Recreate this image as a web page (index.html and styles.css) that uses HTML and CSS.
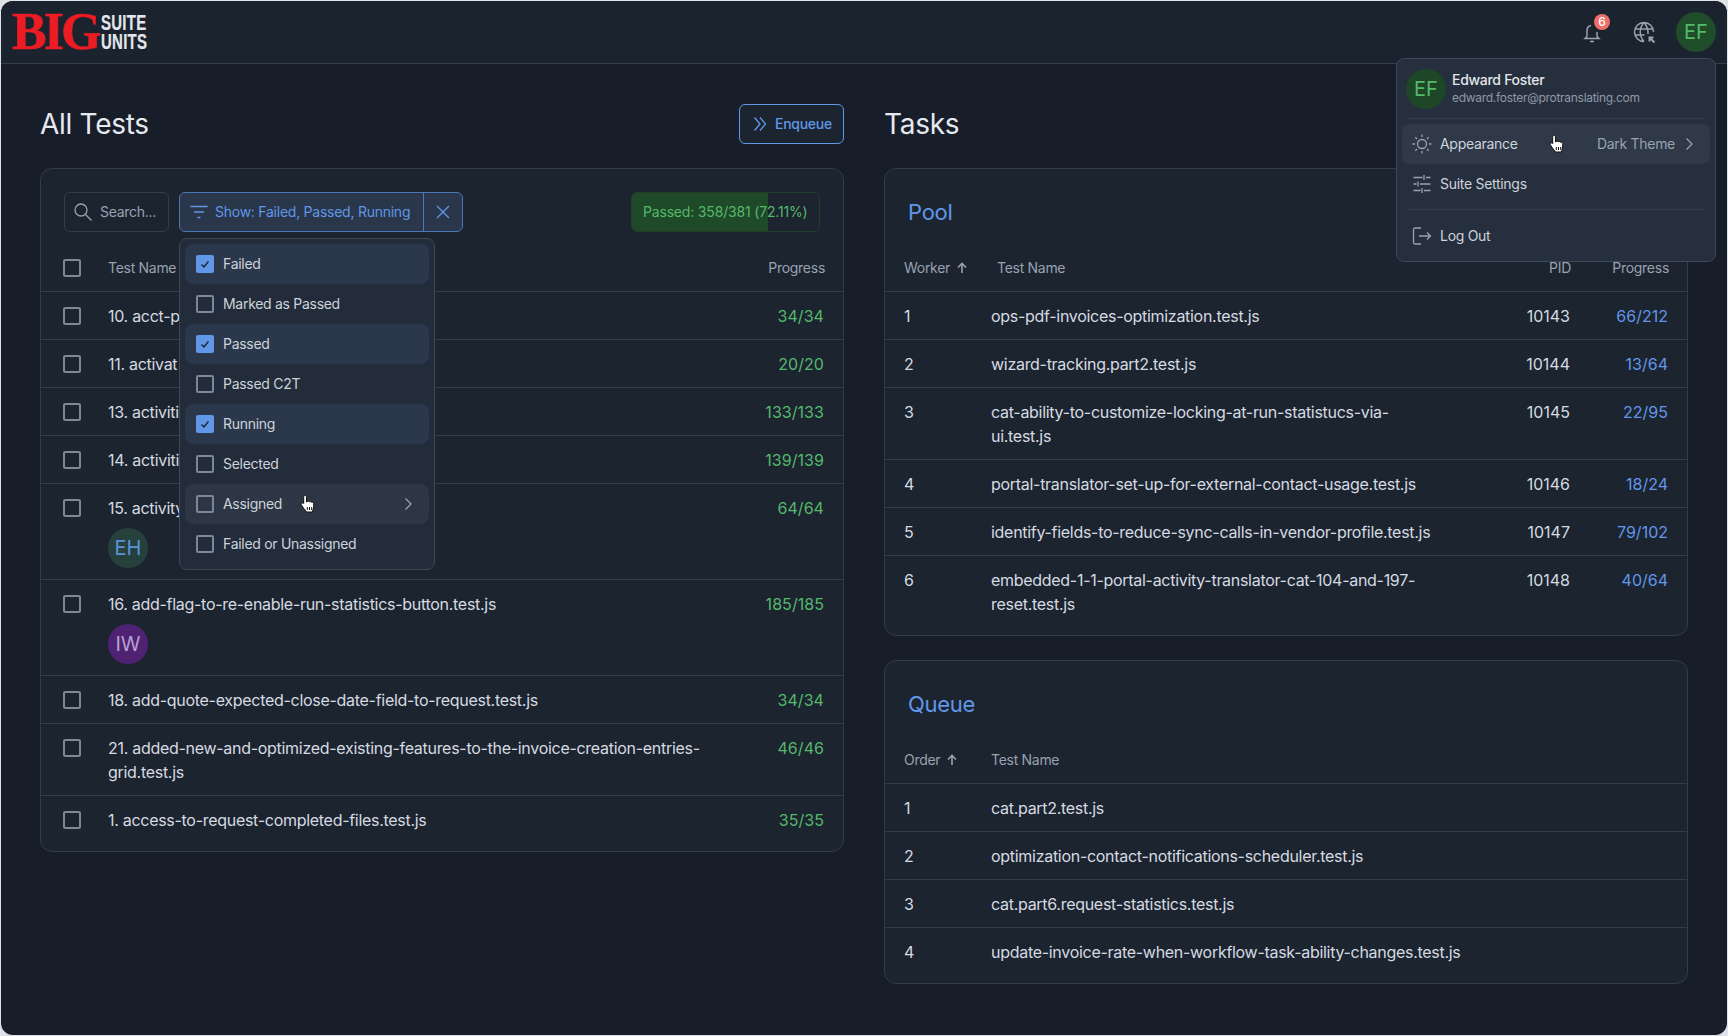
FILE: index.html
```html
<!DOCTYPE html>
<html lang="en">
<head>
<meta charset="utf-8">
<title>Big Suite Units</title>
<link rel="stylesheet" href="styles.css">
</head>
<body>
<div class="app">
  <header class="topbar">
    <div class="logo"><span class="logo-big">BIG</span><span class="logo-sub"><span>SUITE</span><span>UNITS</span></span></div>
    <div class="top-actions">
      <span class="top-icon bell">
        <svg viewBox="0 0 24 24" class="ic24"><path d="M7 16.500V10.500a5 5 0 0 1 4-4.900M17 12v4.500l2 2H5l2-2M10 21.500h4" /></svg>
        <span class="badge">6</span>
      </span>
      <span class="top-icon globe">
        <svg viewBox="0 0 24 24" class="ic24"><path d="M21.500 12a9.500 9.500 0 1 0-9.500 9.500M3 9h18M3 15h9.500M12 2.500c-5 5.500-5 13.500 0 19M12 2.500c3 3.300 4.200 7.500 4 11.500"/><path class="thick" d="M22.500 22.500l-4.500-4.500M17.500 21.500v-4h4"/></svg>
      </span>
      <span class="avatar av-green">EF</span>
    </div>
  </header>

  <main class="columns">
    <section class="col">
      <div class="col-head">
        <h1>All Tests</h1>
        <button class="enqueue"><svg viewBox="0 0 16 16" class="ic16"><path d="M2.500 1.500L8 8l-5.500 6.500M8 1.500L13.500 8 8 14.500"/></svg>Enqueue</button>
      </div>
      <div class="card">
        <div class="toolbar">
          <div class="search"><svg viewBox="0 0 20 20" class="ic20"><circle cx="8" cy="8" r="6"/><path d="M12.500 12.500L18.500 18.500"/></svg><span>Search...</span></div>
          <div class="filter">
            <div class="filter-main"><svg viewBox="0 0 20 20" class="ic20"><path d="M1.500 4.500h17M5 10h10M8.500 15.500h3"/></svg>Show: Failed, Passed, Running</div>
            <div class="filter-clear"><svg viewBox="0 0 16 16" class="ic16"><path d="M2 2l12 12M14 2L2 14"/></svg></div>
            <div class="dropdown">
              <div class="opt sel"><span class="cb on"><svg viewBox="0 0 16 16"><path d="M4 8.500l2.800 2.800L12 5"/></svg></span>Failed</div>
              <div class="opt"><span class="cb"></span>Marked as Passed</div>
              <div class="opt sel"><span class="cb on"><svg viewBox="0 0 16 16"><path d="M4 8.500l2.800 2.800L12 5"/></svg></span>Passed</div>
              <div class="opt"><span class="cb"></span>Passed C2T</div>
              <div class="opt sel"><span class="cb on"><svg viewBox="0 0 16 16"><path d="M4 8.500l2.800 2.800L12 5"/></svg></span>Running</div>
              <div class="opt"><span class="cb"></span>Selected</div>
              <div class="opt hover"><span class="cb"></span>Assigned<svg viewBox="0 0 16 16" class="ic16 opt-chev"><path d="M5.500 2.500L11 8l-5.500 5.500"/></svg>
                <svg class="hand hand-a" viewBox="0 0 16 20"><path d="M5 1.500c1 0 1.500.7 1.500 1.600V8l.5-.2c.4-.7 1.800-.8 2.300 0 .6-.5 1.800-.4 2.200.5.700-.3 2-.1 2.200 1.200.2 1.700 0 4-.4 5.500-.3 1.100-.7 2-1 3H6.500c-.6-1.200-1.600-2.300-2.800-3.700L1.400 11c-.5-.8-.2-1.700.6-2 .7-.3 1.300.1 1.700.6V3.100C3.700 2.200 4.100 1.500 5 1.500z"/><path class="hand-line" d="M7.300 13v3M9.500 13v3M11.700 13v3"/></svg>
              </div>
              <div class="opt"><span class="cb"></span>Failed or Unassigned</div>
            </div>
          </div>
          <div class="passed"><span class="passed-fill"></span><span class="passed-text">Passed: 358/381 (72.11%)</span></div>
        </div>
        <div class="row head"><span class="cb"></span><span class="name">Test Name</span><span class="prog">Progress</span></div>
        <div class="row"><span class="cb"></span><div class="name">10. acct-p</div><span class="prog ok">34/34</span></div>
        <div class="row"><span class="cb"></span><div class="name">11. activat</div><span class="prog ok">20/20</span></div>
        <div class="row"><span class="cb"></span><div class="name">13. activiti</div><span class="prog ok">133/133</span></div>
        <div class="row"><span class="cb"></span><div class="name">14. activiti</div><span class="prog ok">139/139</span></div>
        <div class="row"><span class="cb"></span><div class="name">15. activity<span class="avatar av-teal">EH</span></div><span class="prog ok">64/64</span></div>
        <div class="row"><span class="cb"></span><div class="name">16. add-flag-to-re-enable-run-statistics-button.test.js<span class="avatar av-purple">IW</span></div><span class="prog ok">185/185</span></div>
        <div class="row"><span class="cb"></span><div class="name">18. add-quote-expected-close-date-field-to-request.test.js</div><span class="prog ok">34/34</span></div>
        <div class="row"><span class="cb"></span><div class="name">21. added-new-and-optimized-existing-features-to-the-invoice-creation-entries-grid.test.js</div><span class="prog ok">46/46</span></div>
        <div class="row last"><span class="cb"></span><div class="name">1. access-to-request-completed-files.test.js</div><span class="prog ok">35/35</span></div>
      </div>
    </section>

    <section class="col">
      <div class="col-head"><h1>Tasks</h1></div>
      <div class="card">
        <h2>Pool</h2>
        <div class="trow thead"><span class="sorted">Worker <svg viewBox="0 0 12 12" class="ic12"><path d="M6 11V1.500M2 5.500l4-4 4 4"/></svg></span><span class="shift">Test Name</span><span class="num">PID</span><span class="num">Progress</span></div>
        <div class="trow"><span>1</span><span>ops-pdf-invoices-optimization.test.js</span><span class="num">10143</span><span class="num run">66/212</span></div>
        <div class="trow"><span>2</span><span>wizard-tracking.part2.test.js</span><span class="num">10144</span><span class="num run">13/64</span></div>
        <div class="trow"><span>3</span><span>cat-ability-to-customize-locking-at-run-statistucs-via-ui.test.js</span><span class="num">10145</span><span class="num run">22/95</span></div>
        <div class="trow"><span>4</span><span>portal-translator-set-up-for-external-contact-usage.test.js</span><span class="num">10146</span><span class="num run">18/24</span></div>
        <div class="trow"><span>5</span><span>identify-fields-to-reduce-sync-calls-in-vendor-profile.test.js</span><span class="num">10147</span><span class="num run">79/102</span></div>
        <div class="trow last"><span>6</span><span>embedded-1-1-portal-activity-translator-cat-104-and-197-reset.test.js</span><span class="num">10148</span><span class="num run">40/64</span></div>
      </div>
      <div class="card queue">
        <h2>Queue</h2>
        <div class="qrow thead"><span class="sorted">Order <svg viewBox="0 0 12 12" class="ic12"><path d="M6 11V1.500M2 5.500l4-4 4 4"/></svg></span><span>Test Name</span></div>
        <div class="qrow"><span>1</span><span>cat.part2.test.js</span></div>
        <div class="qrow"><span>2</span><span>optimization-contact-notifications-scheduler.test.js</span></div>
        <div class="qrow"><span>3</span><span>cat.part6.request-statistics.test.js</span></div>
        <div class="qrow last"><span>4</span><span>update-invoice-rate-when-workflow-task-ability-changes.test.js</span></div>
      </div>
    </section>
  </main>

  <aside class="user-menu">
    <div class="um-head">
      <span class="avatar av-green-flat">EF</span>
      <div class="um-id"><div class="um-name">Edward Foster</div><div class="um-mail">edward.foster@protranslating.com</div></div>
    </div>
    <div class="um-div"></div>
    <div class="um-item hover">
      <svg viewBox="0 0 20 20" class="ic20"><circle cx="10" cy="10" r="4.500"/><path d="M10 0.500v2.500M10 17v2.500M0.500 10H3M17 10h2.500M3.300 3.300L5 5M15 15l1.700 1.700M16.700 3.300L15 5M5 15l-1.700 1.700"/></svg>
      <span>Appearance</span>
      <span class="um-val">Dark Theme</span>
      <svg viewBox="0 0 16 16" class="ic16"><path d="M5.500 2.500L11 8l-5.500 5.500"/></svg>
      <svg class="hand hand-b" viewBox="0 0 16 20"><path d="M5 1.500c1 0 1.500.7 1.500 1.600V8l.5-.2c.4-.7 1.800-.8 2.300 0 .6-.5 1.800-.4 2.200.5.700-.3 2-.1 2.200 1.200.2 1.700 0 4-.4 5.500-.3 1.100-.7 2-1 3H6.500c-.6-1.200-1.600-2.300-2.800-3.700L1.400 11c-.5-.8-.2-1.700.6-2 .7-.3 1.300.1 1.700.6V3.100C3.700 2.200 4.100 1.500 5 1.500z"/><path class="hand-line" d="M7.300 13v3M9.500 13v3M11.700 13v3"/></svg>
    </div>
    <div class="um-item">
      <svg viewBox="0 0 20 20" class="ic20"><path d="M1.500 3.500h9M14 3.500h4.500M1.500 10h3M8 10h10.500M1.500 16.500h7M12 16.500h6.500M12 1v5M6 7.500v5M10 14v5"/></svg>
      <span>Suite Settings</span>
    </div>
    <div class="um-div low"></div>
    <div class="um-item">
      <svg viewBox="0 0 20 20" class="ic20"><path d="M9 2H3a1.500 1.500 0 0 0-1.500 1.500v13A1.500 1.500 0 0 0 3 18h6M7 10h11.500M15 6.500l3.500 3.500-3.500 3.500"/></svg>
      <span>Log Out</span>
    </div>
  </aside>
</div>
</body>
</html>
```

FILE: styles.css
```css
* { box-sizing: border-box; }
html, body { margin: 0; height: 100%; }
body {
  background: #dfe3e8;
  padding: 1px;
  font-family: Inter, "Liberation Sans", sans-serif;
  font-size: 16px;
  line-height: 24px;
  letter-spacing: -0.29px;
  color: #d5dae1;
  overflow: hidden;
}
svg { fill: none; stroke: currentColor; stroke-width: 1.3; flex: none; }
.ic24 { width: 24px; height: 24px; }
.ic20 { width: 20px; height: 20px; }
.ic16 { width: 16px; height: 16px; }
.ic12 { width: 12px; height: 12px; stroke-width: 1.6; }
.thick { stroke-width: 2; }

.app {
  position: relative;
  height: 1034px;
  border-radius: 12px;
  overflow: hidden;
  background: #171e2a;
}

/* top bar */
.topbar {
  height: 63px;
  display: flex;
  align-items: center;
  justify-content: space-between;
  padding: 0 11px;
  background: #1b232f;
  border-bottom: 1px solid #333d4b;
}
.logo { display: flex; align-items: center; gap: 4px; }
.logo-big {
  font-family: "Liberation Serif", serif;
  font-weight: 700;
  font-size: 52px;
  line-height: 40px;
  letter-spacing: -3px;
  color: #ec1c24;
  width: 85px;
  -webkit-text-stroke: 0.5px #ec1c24;
}
.logo-sub {
  display: flex;
  flex-direction: column;
  font-family: "Liberation Sans", sans-serif;
  font-weight: 700;
  font-size: 22px;
  line-height: 19px;
  letter-spacing: 0.4px;
  color: #e3e6eb;
  transform: scaleX(0.68);
  transform-origin: left center;
  width: 50px;
  -webkit-text-stroke: 0.2px #e3e6eb;
}
.top-actions { display: flex; align-items: center; }
.top-icon { position: relative; display: flex; color: #98a2b0; }
.top-icon svg { stroke-width: 1.5; }
.top-icon svg .thick { stroke-width: 2; }
.bell { margin-right: 28px; }
.globe { margin-right: 20px; }
.badge {
  position: absolute;
  top: -6px;
  left: 14px;
  width: 16px;
  height: 16px;
  border-radius: 50%;
  background: #ee6f6a;
  color: #fff;
  font-size: 12px;
  font-weight: 500;
  line-height: 16px;
  letter-spacing: 0;
  text-align: center;
}
.avatar {
  display: flex;
  align-items: center;
  justify-content: center;
  width: 40px;
  height: 40px;
  border-radius: 50%;
  font-size: 20px;
  letter-spacing: 0;
  flex: none;
}
.av-green { background: #1f4d2a; color: #55b86b; }
.av-green-flat { background: #1d4726; color: #55b86b; }
.av-teal { background: #26403d; color: #5b93d6; margin-top: 8px; }
.av-purple { background: #4f2273; color: #b9a0d2; margin-top: 8px; }

/* columns */
.columns {
  display: grid;
  grid-template-columns: 804px 804px;
  column-gap: 40px;
  padding: 40px 39px;
  align-items: start;
}
.col-head {
  height: 40px;
  margin-bottom: 24px;
  display: flex;
  align-items: center;
  justify-content: space-between;
}
h1 { margin: 0; font-size: 28px; line-height: 36px; font-weight: 400; color: #e6e9ee; }
h2 {
  margin: 0;
  height: 63px;
  padding: 27px 0 0 23px;
  font-size: 22px;
  line-height: 32px;
  font-weight: 400;
  color: #6097e8;
}
.enqueue {
  display: flex;
  align-items: center;
  gap: 7px;
  height: 40px;
  width: 105px;
  padding: 0 12px;
  font: 500 14px/20px Inter, sans-serif;
  letter-spacing: -0.27px;
  color: #6097e8;
  background: #1c2430;
  border: 1px solid #6097e8;
  border-radius: 6px;
}
.card {
  position: relative;
  background: #1c2430;
  border: 1px solid #323c4b;
  border-radius: 12px;
  padding-bottom: 8px;
}
.queue { margin-top: 24px; }

/* toolbar */
.toolbar {
  display: flex;
  gap: 10px;
  height: 63px;
  padding: 23px 23px 0;
  font-size: 14px;
  line-height: 20px;
}
.search {
  display: flex;
  align-items: center;
  gap: 7px;
  width: 105px;
  height: 40px;
  padding: 0 8px;
  border: 1px solid #323c4b;
  border-radius: 6px;
  color: #98a2b0;
}
.filter {
  position: relative;
  display: flex;
  height: 40px;
  width: 284px;
  color: #6097e8;
  background: #2a3649;
  border: 1px solid #4d78b5;
  border-radius: 6px;
}
.filter-main {
  display: flex;
  align-items: center;
  gap: 6px;
  width: 244px;
  padding-left: 9px;
  border-right: 1px solid #4d78b5;
  white-space: nowrap;
  letter-spacing: -0.25px;
}
.filter-clear { flex: 1; display: flex; align-items: center; justify-content: center; }
.dropdown {
  position: absolute;
  z-index: 5;
  top: 45px;
  left: -1px;
  width: 256px;
  padding: 5px;
  background: #232c3a;
  border: 1px solid #3d4857;
  border-radius: 8px;
  color: #cdd3db;
}
.opt {
  position: relative;
  display: flex;
  align-items: center;
  gap: 9px;
  height: 40px;
  padding: 0 11px;
  border-radius: 8px;
}
.opt.sel { background: #2b384c; }
.opt.hover { background: #2d3644; }
.opt-chev { margin-left: auto; color: #98a2b0; margin-right: 2px; }
.hand { position: absolute; width: 16px; height: 20px; z-index: 9; color: #111; fill: #fff; stroke: #111; stroke-width: 1; }
.um-item svg.hand { color: #111; }
.hand-line { fill: none; }
.hand-a { left: 115px; top: 10px; }
.hand-b { left: 147px; top: 10px; }
.cb {
  display: flex;
  flex: none;
  width: 18px;
  height: 18px;
  background: transparent;
  border: 2px solid #7d8795;
  border-radius: 2px;
}
.cb.on { background: #6097e8; border-color: #6097e8; }
.cb.on svg { width: 14px; height: 14px; color: #1c2430; stroke-width: 1.6; }
.passed {
  position: relative;
  margin-left: auto;
  display: flex;
  align-items: center;
  width: 189px;
  height: 40px;
  padding: 0 11px;
  border: 1px solid #223f2b;
  border-radius: 6px;
  overflow: hidden;
  white-space: nowrap;
  letter-spacing: -0.18px;
  color: #55b86b;
}
.passed-fill { position: absolute; inset: -1px auto -1px -1px; width: 73%; background: #1f4a29; }
.passed-text { position: relative; }

/* left table */
.row {
  display: flex;
  align-items: flex-start;
  gap: 27px;
  padding: 12px 19px 11px 22px;
  border-bottom: 1px solid #323c4b;
}
.row .cb { margin-top: 3px; }
.row.head {
  align-items: center;
  padding: 26px 18px 14px 22px;
  height: 60px;
  font-size: 14px;
  line-height: 20px;
  color: #98a2b0;
}
.row.head .cb { margin-top: 0; }
.name { flex: 1; }
.prog { width: 70px; text-align: right; letter-spacing: 0.05px; }
.head .prog { letter-spacing: -0.27px; }
.ok { color: #55b86b; }
.last { border-bottom: 0; }

/* right tables */
.trow, .qrow {
  display: grid;
  padding: 12px 19px 11px 19px;
  border-bottom: 1px solid #323c4b;
}
.trow { grid-template-columns: 87px 450px 1fr 98px; }
.qrow { grid-template-columns: 87px 1fr; }
.trow.last, .qrow.last { border-bottom: 0; }
.thead {
  padding: 26px 18px 14px 19px;
  height: 60px;
  font-size: 14px;
  line-height: 20px;
  color: #98a2b0;
}
.shift { padding-left: 6px; }
.num { text-align: right; letter-spacing: 0; }
.thead .num { letter-spacing: -0.27px; }
.run { color: #6097e8; }
.sorted { display: flex; align-items: center; gap: 6px; }

/* user menu */
.user-menu {
  position: absolute;
  z-index: 8;
  top: 57px;
  right: 11px;
  width: 320px;
  height: 204px;
  background: #262f3e;
  border: 1px solid #3d4857;
  border-radius: 8px;
  font-size: 14px;
  line-height: 20px;
  color: #cdd3db;
}
.um-head { display: flex; align-items: center; gap: 6px; padding: 9px; height: 59px; }
.um-id { margin-top: -2px; }
.um-name { font-weight: 500; color: #e3e6eb; }
.um-mail { font-size: 12px; line-height: 16px; color: #8f99a7; }
.um-div { height: 1px; margin: 0 9px 5px; background: #323c4b; }
.um-div.low { margin-top: 5px; margin-bottom: 6px; }
.um-item {
  position: relative;
  display: flex;
  align-items: center;
  gap: 8px;
  height: 40px;
  margin: 0 5px;
  padding: 0 13px 0 10px;
  border-radius: 8px;
}
.um-item svg { color: #98a2b0; }
.um-item.hover { background: #2f3948; }
.um-val { margin-left: auto; color: #98a2b0; margin-right: -2px; }
```
